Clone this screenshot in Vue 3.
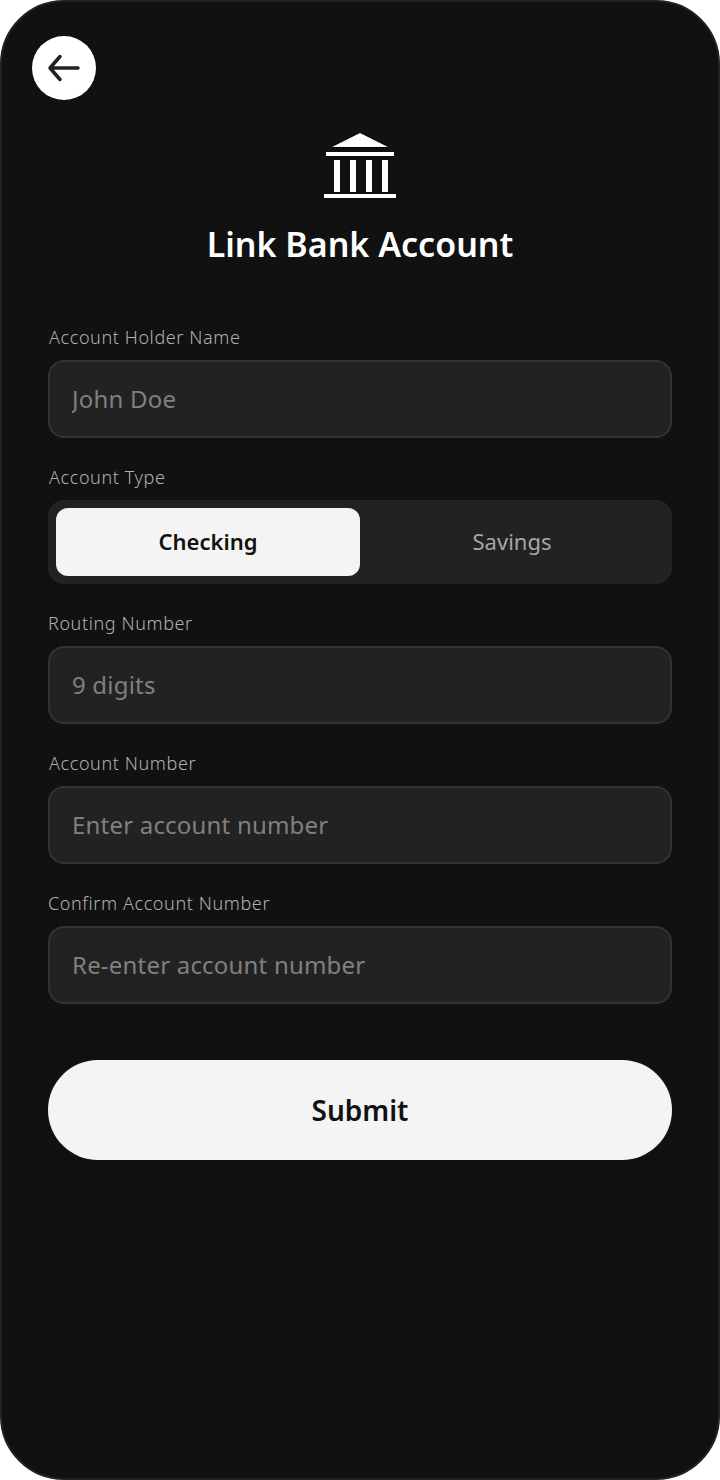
<script setup>
import { ref } from 'vue'

const accountType = ref('Checking')
const types = ['Checking', 'Savings']
</script>

<template>
  <div class="screen">
    <button class="back" aria-label="Back">
      <svg width="36" height="36" viewBox="0 0 36 36" fill="none">
        <path d="M4 18H32M14 6.500L4 18L14 29.500" stroke="#222" stroke-width="3.500" stroke-linecap="round" stroke-linejoin="round" />
      </svg>
    </button>

    <div class="head">
      <svg class="bank" width="72" height="66" viewBox="0 0 72 66">
        <path d="M36 1L64 15H8Z" fill="#fff" stroke="#000" stroke-width="1.500" paint-order="stroke" />
        <rect x="2" y="20" width="68" height="4" fill="#fff" />
        <rect x="10" y="28" width="6" height="32" fill="#fff" />
        <rect x="26" y="28" width="6" height="32" fill="#fff" />
        <rect x="42" y="28" width="6" height="32" fill="#fff" />
        <rect x="58" y="28" width="6" height="32" fill="#fff" />
        <rect x="0" y="62" width="72" height="4" fill="#fff" />
      </svg>
      <h1>Link Bank Account</h1>
    </div>

    <form class="form" @submit.prevent>
      <label class="field">
        <span class="label">Account Holder Name</span>
        <input class="input" type="text" placeholder="John Doe" />
      </label>

      <div class="field">
        <span class="label">Account Type</span>
        <div class="segment">
          <button
            v-for="t in types"
            :key="t"
            type="button"
            class="tab"
            :class="{ active: accountType === t }"
            @click="accountType = t"
          >{{ t }}</button>
        </div>
      </div>

      <label class="field">
        <span class="label flush">Routing Number</span>
        <input class="input" type="text" placeholder="9 digits" />
      </label>

      <label class="field">
        <span class="label">Account Number</span>
        <input class="input" type="text" placeholder="Enter account number" />
      </label>

      <label class="field">
        <span class="label flush">Confirm Account Number</span>
        <input class="input" type="text" placeholder="Re-enter account number" />
      </label>

      <button class="submit" type="submit">Submit</button>
    </form>
  </div>
</template>

<style>
html, body {
  background: #fff;
}
</style>

<style scoped>
.screen {
  box-sizing: border-box;
  width: 720px;
  height: 1480px;
  padding: 36px 48px 0;
  background: #111;
  border: 2px solid #222;
  border-radius: 64px;
  font-family: "Noto Sans", sans-serif;
  position: relative;
}

.back {
  position: absolute;
  left: 30px;
  top: 34px;
  width: 64px;
  height: 64px;
  padding: 0;
  border: none;
  border-radius: 50%;
  background: #fff;
  display: flex;
  align-items: center;
  justify-content: center;
}

.head {
  display: flex;
  flex-direction: column;
  align-items: center;
  padding-top: 94px;
}

.bank {
  display: block;
}

h1 {
  margin: 24px 0 0;
  font-size: 34px;
  line-height: 44px;
  font-weight: 600;
  color: #fff;
}

.form {
  margin: 0 -2px;
  display: flex;
  flex-direction: column;
  gap: 28px;
  padding-top: 60px;
}

.field {
  display: flex;
  flex-direction: column;
  gap: 12px;
}

.label {
  font-size: 18px;
  line-height: 22px;
  font-weight: 300;
  color: #b0b0b0;
  padding-left: 1px;
  letter-spacing: 0.6px;
}

.label.flush {
  padding-left: 0;
}

.input {
  box-sizing: border-box;
  width: 100%;
  height: 78px;
  padding: 0 22px 2px;
  background: #222;
  border: 2px solid #333;
  border-radius: 16px;
  color: #fff;
  font-family: inherit;
  font-size: 24px;
  letter-spacing: 0.2px;
  outline: none;
}

.input::placeholder {
  color: #808080;
  opacity: 1;
}

.segment {
  display: grid;
  grid-template-columns: 1fr 1fr;
  padding: 8px;
  height: 84px;
  box-sizing: border-box;
  background: #222;
  border-radius: 16px;
}

.tab {
  border: none;
  background: none;
  border-radius: 12px;
  padding: 0 0 2px;
  font-family: inherit;
  font-size: 22px;
  color: #a6a6a6;
}

.tab.active {
  background: #f4f4f4;
  color: #111;
  font-weight: 600;
}

.submit {
  margin-top: 28px;
  height: 100px;
  border: none;
  border-radius: 50px;
  background: #f4f4f4;
  color: #111;
  font-family: inherit;
  font-size: 28px;
  font-weight: 600;
}
</style>
